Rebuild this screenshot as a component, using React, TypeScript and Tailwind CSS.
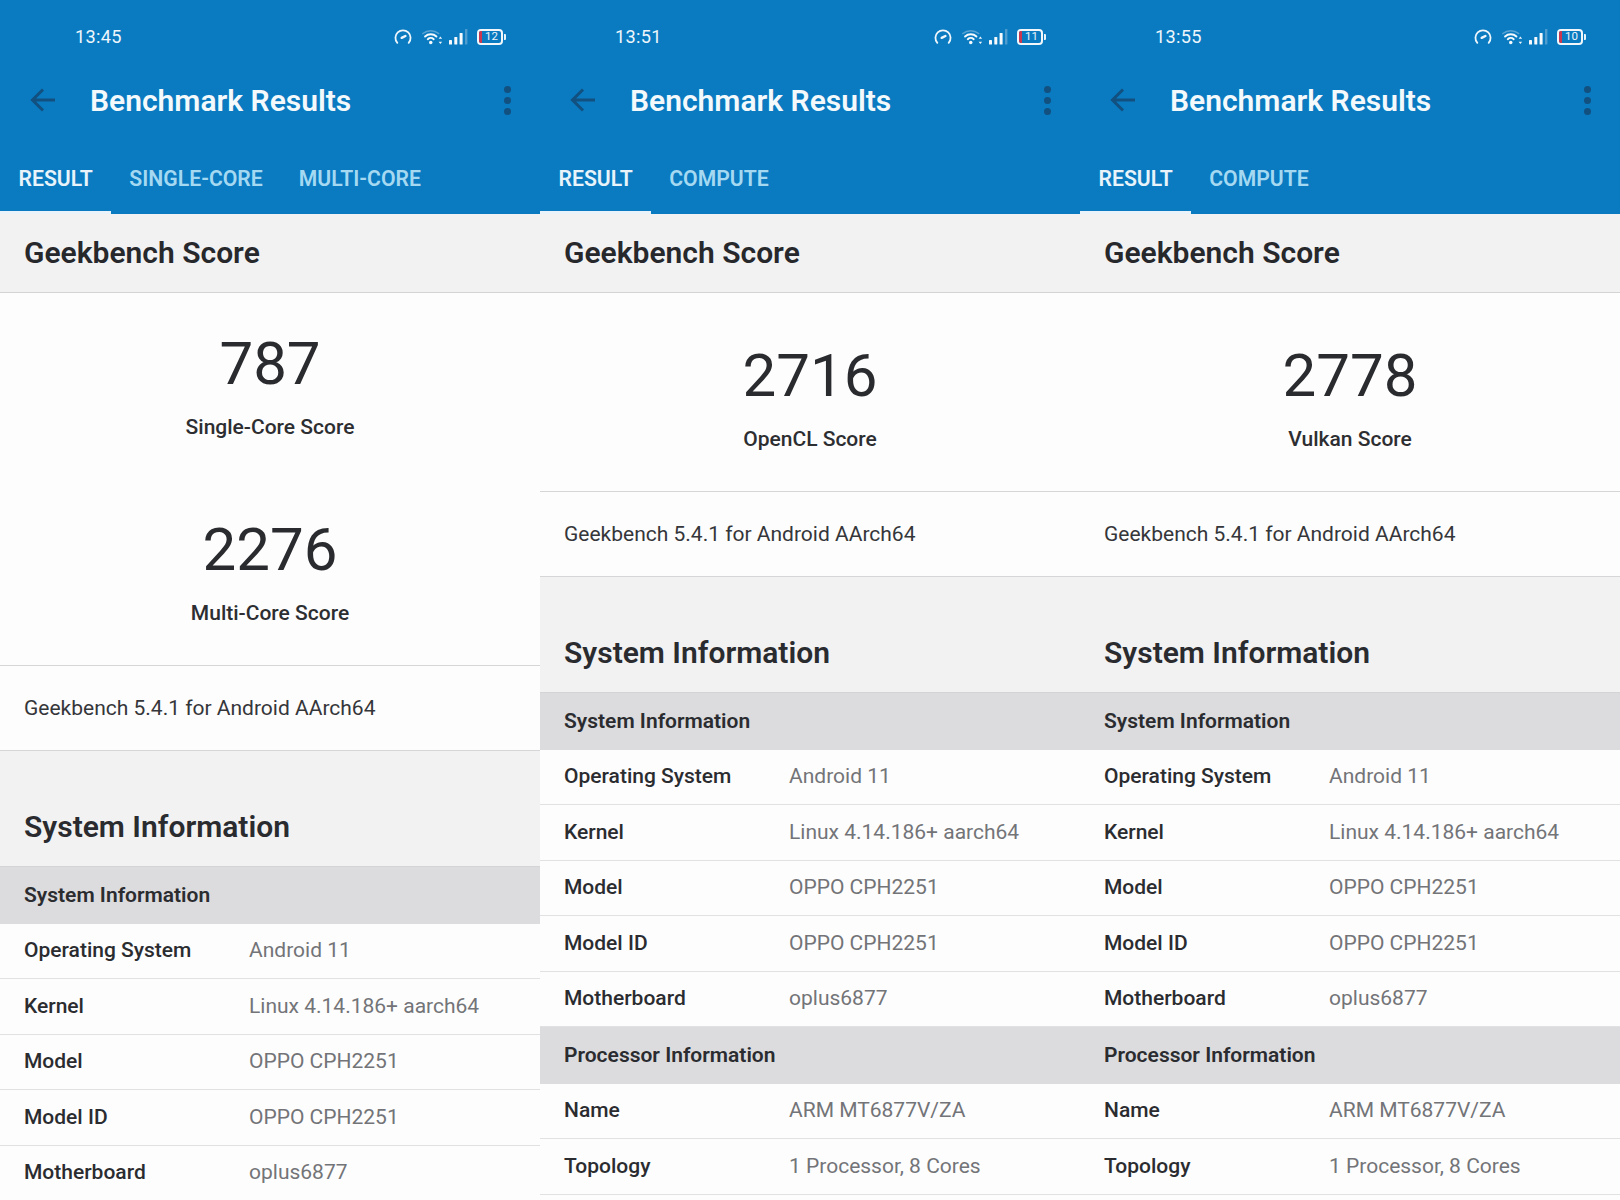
const F = "font-['Roboto','Liberation_Sans',sans-serif]";

function Gauge() {
  return (
    <svg width="18" height="18" viewBox="0 0 20 20" fill="none" stroke="#eef6fb" strokeWidth="2" strokeLinecap="round">
      <path d="M3.7 16.5a8.4 8.4 0 1 1 12.6 0" />
      <path d="M8.5 11l4.2-2.2" strokeWidth="2.6" />
    </svg>
  );
}

function Wifi() {
  return (
    <svg width="21" height="18" viewBox="0 0 24 20" fill="none" strokeLinecap="round">
      <path d="M1 6a14 14 0 0 1 18 0" stroke="#5ba3d3" strokeWidth="1.7" />
      <path d="M3.5 9.4a9.6 9.6 0 0 1 13 0" stroke="#f6fafc" strokeWidth="2.2" />
      <path d="M6.6 12.5a5 5 0 0 1 6.8 0" stroke="#f6fafc" strokeWidth="2.2" />
      <circle cx="10" cy="16.2" r="2" fill="#f6fafc" />
      <path d="M21 9.5l-2 2.6h4zM21 18l-2-2.6h4z" fill="#eef6fb" />
    </svg>
  );
}

function Signal() {
  return (
    <svg width="20" height="20" viewBox="0 0 20 20">
      <rect x="1" y="13" width="3" height="4.5" rx="0.6" fill="#f6fafc" />
      <rect x="6.3" y="10" width="3" height="7.5" rx="0.6" fill="#f6fafc" />
      <rect x="11.6" y="6" width="3" height="11.5" rx="0.6" fill="#f6fafc" />
      <rect x="17" y="2" width="2.4" height="15.5" rx="0.6" fill="#4f9dcf" />
    </svg>
  );
}

function Battery({ level }: { level: string }) {
  return (
    <div className="flex items-center">
      <div className="relative flex h-[16px] w-[26px] items-center justify-center overflow-hidden rounded-[4px] border-[2px] border-[#f2f7fb]">
        <div className="absolute bottom-0 left-0 top-0 w-[3px] bg-[#c9384f]" />
        <span className="pl-[3px] text-[11.5px] leading-none text-[#eaf3f9]">{level}</span>
      </div>
      <div className="ml-[1px] h-[6px] w-[2px] rounded-r-[1px] bg-[#e8f2f9]" />
    </div>
  );
}

function Header({ time, level, tabs }: { time: string; level: string; tabs: string[] }) {
  return (
    <div className="h-[214px] bg-[#0a7bc1]">
      <div className="flex h-[72px] items-center pl-[75px] pr-[34px] pt-[1px]">
        <span className="text-[18.2px] tracking-[0.3px] text-[#eef6fb]">{time}</span>
        <div className="ml-auto flex items-center">
          <Gauge />
          <div className="ml-[10px]"><Wifi /></div>
          <div className="ml-[5px]"><Signal /></div>
          <div className="ml-[9px]"><Battery level={level} /></div>
        </div>
      </div>
      <div className="flex h-[56px] items-center pl-[30px] pr-[29px]">
        <svg width="26" height="24" viewBox="0 0 26 24" fill="none" stroke="#12507f" strokeWidth="3">
          <path d="M25 12H3M13 1.5L2.5 12 13 22.5" />
        </svg>
        <span className="ml-[34px] pt-[1px] text-[30px] font-semibold leading-none text-[#f4f9fc]">Benchmark Results</span>
        <div className="ml-auto flex flex-col gap-[4px]">
          <div className="h-[7px] w-[7px] rounded-full bg-[#12507f]" />
          <div className="h-[7px] w-[7px] rounded-full bg-[#12507f]" />
          <div className="h-[7px] w-[7px] rounded-full bg-[#12507f]" />
        </div>
      </div>
      <div className="mt-[15px] flex h-[71px] items-stretch">
        {tabs.map((t, i) => (
          <div
            key={t}
            className={
              i === 0
                ? "flex items-center border-b-[3px] border-[#e9f3f9] px-[18.5px] pt-[3px] text-[21.2px] font-semibold text-[#e8f3fa]"
                : "flex items-center border-b-[3px] border-transparent px-[18px] pt-[3px] text-[21.2px] font-semibold text-[#a5d9f2]"
            }
          >
            {t}
          </div>
        ))}
      </div>
    </div>
  );
}

function Score({ value, label }: { value: string; label: string }) {
  return (
    <div className="flex flex-col items-center">
      <div className="h-[70px] text-[60px] leading-[70px] text-[#2a2b2e]">{value}</div>
      <div className="mt-[14px] h-[28px] text-[21px] font-medium leading-[28px] text-[#2d2e31]">{label}</div>
    </div>
  );
}

function Group({ title }: { title: string }) {
  return (
    <div className="flex h-[57px] items-center bg-[#dcdcde] px-[24px] text-[21px] font-semibold text-[#2b2c30]">
      {title}
    </div>
  );
}

function Row({ k, v }: { k: string; v: string }) {
  return (
    <div className="flex h-[55.4px] items-center border-b-[1.5px] border-[#e1e1e3] pl-[24px] text-[21px]">
      <div className="w-[225px] font-medium text-[#2b2c30]">{k}</div>
      <div className="text-[#737478]">{v}</div>
    </div>
  );
}

function Common() {
  return (
    <>
      <div className="flex h-[85px] items-center border-b-[1.5px] border-[#d6d6d8] bg-[#fdfdfd] pl-[24px] pt-[1px] text-[21px] text-[#35363a]">
        Geekbench 5.4.1 for Android AArch64
      </div>
      <div className="flex h-[116px] items-end border-b-[1.5px] border-[#d4d4d6] bg-[#f2f2f3] pb-[19px] pl-[24px] text-[30px] font-semibold leading-[40px] text-[#2a2b2f]">
        System Information
      </div>
    </>
  );
}

const SYS = (
  <>
    <Group title="System Information" />
    <Row k="Operating System" v="Android 11" />
    <Row k="Kernel" v="Linux 4.14.186+ aarch64" />
    <Row k="Model" v="OPPO CPH2251" />
    <Row k="Model ID" v="OPPO CPH2251" />
    <Row k="Motherboard" v="oplus6877" />
  </>
);

function ScoreHead() {
  return (
    <div className="flex h-[79px] items-center border-b-[1.5px] border-[#d4d4d6] bg-[#f2f2f3] pb-[2px] pl-[24px] text-[30px] font-semibold text-[#27282c]">
      Geekbench Score
    </div>
  );
}

function Compute({ time, level, value, label }: { time: string; level: string; value: string; label: string }) {
  return (
    <div className="w-[540px] shrink-0 overflow-hidden bg-[#fdfdfd]">
      <Header time={time} level={level} tabs={["RESULT", "COMPUTE"]} />
      <ScoreHead />
      <div className="flex h-[199px] flex-col border-b-[1.5px] border-[#d6d6d8] pt-[48px]">
        <Score value={value} label={label} />
      </div>
      <Common />
      {SYS}
      <Group title="Processor Information" />
      <Row k="Name" v="ARM MT6877V/ZA" />
      <Row k="Topology" v="1 Processor, 8 Cores" />
    </div>
  );
}

export default function App() {
  return (
    <div className={`${F} flex h-[1200px] w-[1620px] overflow-hidden bg-[#fdfdfd]`}>
      <div className="w-[540px] shrink-0 overflow-hidden bg-[#fdfdfd]">
        <Header time="13:45" level="12" tabs={["RESULT", "SINGLE-CORE", "MULTI-CORE"]} />
        <ScoreHead />
        <div className="flex h-[373px] flex-col gap-[74px] border-b-[1.5px] border-[#d6d6d8] pt-[36px]">
          <Score value="787" label="Single-Core Score" />
          <Score value="2276" label="Multi-Core Score" />
        </div>
        <Common />
        {SYS}
      </div>
      <Compute time="13:51" level="11" value="2716" label="OpenCL Score" />
      <Compute time="13:55" level="10" value="2778" label="Vulkan Score" />
    </div>
  );
}
